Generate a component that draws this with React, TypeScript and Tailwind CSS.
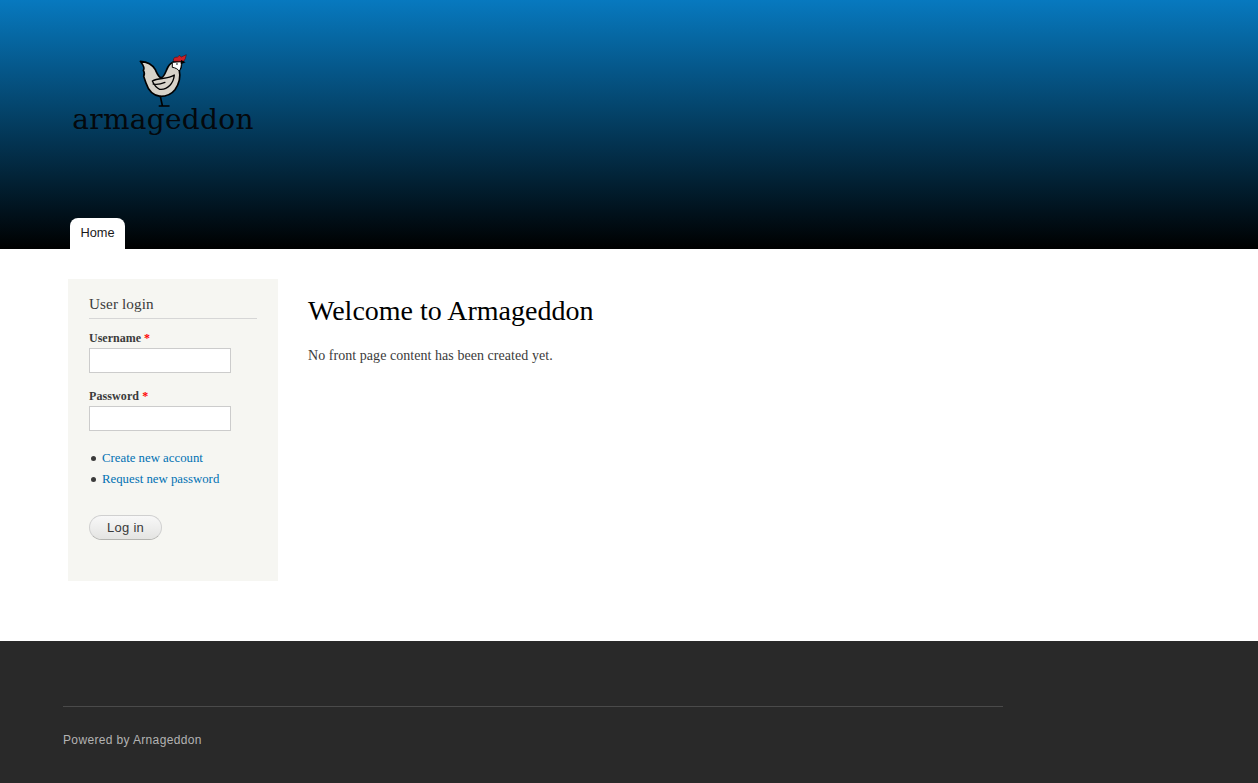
export default function App() {
  return (
    <div className="min-h-[783px] flex flex-col bg-white font-['Liberation_Serif',serif] text-[#3b3b3b]">
      <header className="h-[249px] bg-[linear-gradient(to_bottom,#0779bf,#000000)] flex flex-col pl-[68px]">
        <div className="pt-[53px] w-[190px] flex flex-col items-center">
          <svg width="53.3" height="56.7" viewBox="230 40 160 170" className="ml-[2px]">
            <path d="M240 65 C258 66 275 72 285 90 C291 103 295 114 303 114 C313 112 316 94 323 82 C328 73 334 68 342 66 L362 66 C365 75 362 85 357 92 C361 110 358 130 344 150 C334 163 318 170 300 170 C280 168 264 152 257 130 C254 122 252 116 250 110 C253 104 254 100 249 92 C253 88 250 78 240 65 Z" fill="#d8d3c9" stroke="#000" strokeWidth="5" strokeLinejoin="round" />
            <path d="M336 68 L362 66 C365 78 361 88 357 94 C352 88 345 84 336 83 Z" fill="#fff" stroke="#000" strokeWidth="3" strokeLinejoin="round" />
            <circle cx="350" cy="73" r="2.5" fill="#000" />
            <path d="M339 62 C339 53 347 51 351 53 L357 47 L363 52 L378 45 L375 57 L370 65 L342 65 Z" fill="#cc2027" stroke="#3a0709" strokeWidth="1.5" strokeLinejoin="round" />
            <path d="M362 61 L376 68 L362 74 Z" fill="#000" />
            <path d="M276 124 C294 113 322 120 342 106 C340 130 322 152 298 149 C289 145 281 135 276 124 Z" fill="none" stroke="#000" strokeWidth="4" strokeLinejoin="round" />
            <path d="M278 133 C290 136 302 133 314 128" fill="none" stroke="#000" strokeWidth="3.5" strokeLinecap="round" />
            <path d="M300 170 L306 197 M297 199 L326 199" fill="none" stroke="#000" strokeWidth="5" strokeLinecap="round" />
          </svg>
          <span className="mt-[-5px] font-['DejaVu_Serif',serif] text-[28px] leading-[30px] tracking-[0.3px] text-[#04080c]">armageddon</span>
        </div>
        <nav className="mt-auto flex pl-[2px]">
          <a className="h-[31px] w-[55px] bg-white rounded-t-lg pt-[7px] text-center font-['Liberation_Sans',sans-serif] text-[12.8px] leading-[16px] text-[#1a1a1a]">Home</a>
        </nav>
      </header>

      <main className="flex-1 flex items-start pl-[68px] pt-[30px] pb-[60px]">
        <aside className="w-[210px] h-[302px] shrink-0 bg-[#f6f6f2] px-[21px] pt-[16px]">
          <h2 className="text-[15.2px] leading-[18px] tracking-[0.1px] text-[#3b3b3b] pb-[5px] border-b border-[#d6d6d6]">User login</h2>
          <form>
            <label className="block mt-[11px] text-[12px] leading-[16px] font-bold text-[#3b3b3b]">Username <span className="text-[#ff0000]">*</span></label>
            <input className="block mt-[2px] w-[142px] h-[25px] bg-white border border-[#cccccc]" />
            <label className="block mt-[15px] text-[12px] leading-[16px] tracking-[0.1px] font-bold text-[#3b3b3b]">Password <span className="text-[#ff0000]">*</span></label>
            <input type="password" className="block mt-[2px] w-[142px] h-[25px] bg-white border border-[#cccccc]" />
            <ul className="mt-[17px] text-[12.8px] leading-[21px]">
              <li className="flex items-center"><span className="w-[5px] h-[5px] rounded-full bg-[#3b3b3b] mr-[6px] ml-[2px] mb-[1px]" /><a className="text-[#0071b3]">Create new account</a></li>
              <li className="flex items-center"><span className="w-[5px] h-[5px] rounded-full bg-[#3b3b3b] mr-[6px] ml-[2px] mb-[1px]" /><a className="text-[#0071b3]">Request new password</a></li>
            </ul>
            <button type="button" className="block mt-[25px] w-[73px] h-[25px] rounded-[15px] border border-[#d0d0d0] border-b-[#b4b4b0] bg-[linear-gradient(to_bottom,#f8f8f8,#e4e4e2)] font-['Liberation_Sans',sans-serif] text-[13px] leading-[22px] tracking-[0.3px] text-[#3a3a3a]">Log in</button>
          </form>
        </aside>
        <section className="ml-[30px] pt-[15px]">
          <h1 className="text-[28px] leading-[34px] text-black">Welcome to Armageddon</h1>
          <p className="mt-[17px] text-[14px] leading-[21px] tracking-[0.05px] text-[#3b3b3b]">No front page content has been created yet.</p>
        </section>
      </main>

      <footer className="h-[142px] bg-[#292929] pl-[63px] pt-[65px] font-['Liberation_Sans',sans-serif]">
        <div className="w-[940px] border-t border-[#4a4a4a] pt-[26px] text-[12px] leading-[14px] tracking-[0.35px] text-[#b3b3b3]">Powered by Arnageddon</div>
      </footer>
    </div>
  );
}
